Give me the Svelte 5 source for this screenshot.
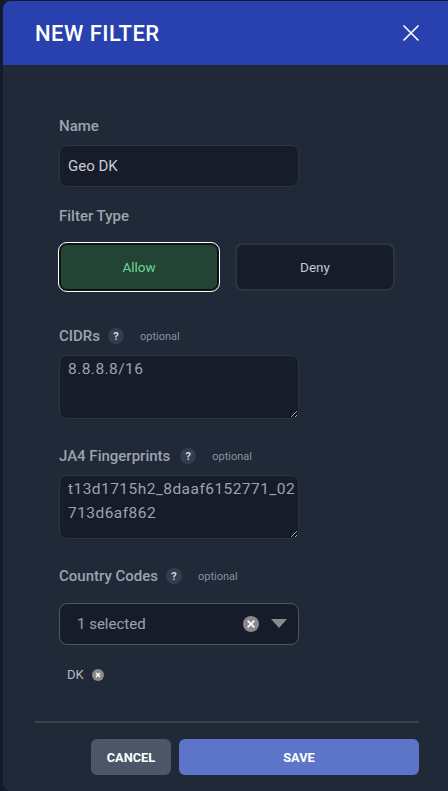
<script>
  let name = $state("Geo DK");
  let filterType = $state("allow");
  let cidrs = $state("8.8.8.8/16");
  let ja4 = $state("t13d1715h2_8daaf6152771_02713d6af862");
  let codes = $state(["DK"]);
</script>

<div class="modal">
  <header class="head">
    <h2>NEW FILTER</h2>
    <button class="close" type="button" aria-label="Close">
      <svg viewBox="0 0 18 18" width="18" height="18" aria-hidden="true">
        <path d="M1.5 1.5l15 15M16.5 1.5l-15 15" fill="none" stroke="currentColor" stroke-width="1.6" />
      </svg>
    </button>
  </header>

  <form class="body" on:submit|preventDefault>
    <div class="fields">
      <label class="label" for="name">Name</label>
      <input id="name" class="input" bind:value={name} />

      <div class="label type-label">Filter Type</div>
      <div class="types">
        <button type="button" class="type" class:allow={filterType === "allow"} on:click={() => (filterType = "allow")}>Allow</button>
        <button type="button" class="type" class:allow={filterType === "deny"} on:click={() => (filterType = "deny")}>Deny</button>
      </div>

      <div class="label-row cidrs">
        <label class="label" for="cidrs">CIDRs</label>
        <span class="help">?</span>
        <span class="optional">optional</span>
      </div>
      <textarea id="cidrs" class="area" bind:value={cidrs}></textarea>

      <div class="label-row ja4">
        <label class="label" for="ja4">JA4 Fingerprints</label>
        <span class="help">?</span>
        <span class="optional">optional</span>
      </div>
      <textarea id="ja4" class="area" bind:value={ja4}></textarea>

      <div class="label-row country">
        <span class="label">Country Codes</span>
        <span class="help">?</span>
        <span class="optional">optional</span>
      </div>
      <div class="select">
        <span class="select-text">{codes.length} selected</span>
        <span class="clear">
          <svg viewBox="0 0 16 16" width="16" height="16" aria-hidden="true">
            <circle cx="8" cy="8" r="8" fill="#8a8a8a" />
            <path d="M4.6 4.6l6.8 6.8M11.4 4.6l-6.8 6.8" stroke="#fff" stroke-width="1.6" />
          </svg>
        </span>
        <svg class="caret" viewBox="0 0 16 9" width="16" height="9" aria-hidden="true">
          <path d="M0 0h16l-8 9z" fill="#8a8a8a" />
        </svg>
      </div>

      <div class="tags">
        {#each codes as code}
          <span class="tag">
            {code}
            <svg viewBox="0 0 12 12" width="12" height="12" aria-hidden="true">
              <circle cx="6" cy="6" r="6" fill="#8a8a8a" />
              <path d="M4 4l4 4M8 4l-4 4" stroke="#fff" stroke-width="1.4" />
            </svg>
          </span>
        {/each}
      </div>
    </div>

    <footer class="foot">
      <button type="button" class="btn cancel">CANCEL</button>
      <button type="submit" class="btn save">SAVE</button>
    </footer>
  </form>
</div>

<style>
  :global(body) {
    background: #141a2b;
    font-family: Roboto, "Noto Sans", sans-serif;
    overflow: hidden;
  }

  .modal {
    margin: 1px 0 0 3px;
    height: 790px;
    background: #1f2937;
    border-radius: 8px 0 0 8px;
    overflow: hidden;
    display: flex;
    flex-direction: column;
  }

  .head {
    height: 64px;
    flex: none;
    background: #2841ae;
    color: #fff;
    display: flex;
    align-items: center;
    justify-content: space-between;
    padding: 0 28px 0 32px;
  }

  h2 {
    margin: 0;
    font-size: 22px;
    font-weight: 500;
    letter-spacing: 0.45px;
  }

  .close {
    all: unset;
    color: #fff;
    display: flex;
  }

  .body {
    flex: 1;
    display: flex;
    flex-direction: column;
    padding: 0 29px 16px 32px;
  }

  .fields {
    flex: 1;
    padding: 52px 24px 0;
  }

  .label {
    display: block;
    color: #9ca3af;
    font-size: 15px;
    font-weight: 500;
    line-height: 18px;
  }

  .input,
  .area,
  .select {
    box-sizing: border-box;
    display: block;
    width: 240px;
    background: #171c2b;
    border: 1px solid #2c3444;
    border-radius: 8px;
    color: #c9cdd3;
    font-family: inherit;
    font-size: 15px;
    outline: none;
  }

  .input {
    height: 42px;
    margin-top: 10px;
    padding: 0 8px;
  }

  .type-label {
    margin-top: 20px;
  }

  .types {
    display: flex;
    gap: 16px;
    margin-top: 18px;
  }

  .type {
    box-sizing: border-box;
    width: 160px;
    height: 48px;
    border-radius: 8px;
    border: 2px solid #2c3444;
    background: #171c2b;
    color: #c3c8d0;
    font-family: inherit;
    font-size: 13.5px;
  }

  .type.allow {
    background: #234435;
    color: #6fd695;
    border: 1px solid #111;
    outline: 1px solid #fff;
    box-shadow: inset 0 0 0 1px #111;
  }

  .label-row {
    display: flex;
    align-items: center;
    height: 18px;
  }

  .cidrs {
    margin-top: 36px;
  }

  .ja4 {
    margin-top: 28px;
  }

  .country {
    margin-top: 28px;
  }

  .help {
    width: 16px;
    height: 16px;
    margin-left: 8px;
    border-radius: 50%;
    background: #333d50;
    color: #d1d5db;
    font-size: 11px;
    font-weight: 700;
    display: flex;
    align-items: center;
    justify-content: center;
  }

  .ja4 .help {
    margin-left: 10px;
  }

  .optional {
    margin-left: 16px;
    color: #8791a1;
    font-size: 11px;
  }

  .area {
    height: 64px;
    margin-top: 10px;
    padding: 1px 0 1px 8px;
    color: #9ca3af;
    font-size: 15.5px;
    letter-spacing: 0.45px;
    line-height: 24px;
    word-break: break-all;
  }

  .select {
    height: 42px;
    margin-top: 18px;
    border-color: #4b5563;
    padding: 0 11px 0 17px;
    display: flex;
    align-items: center;
    color: #9ca3af;
  }

  .select-text {
    flex: 1;
  }

  .clear {
    display: flex;
    margin-right: 12px;
  }

  .caret {
    margin-top: -2px;
  }

  .tags {
    margin-top: 19px;
    padding-left: 8px;
  }

  .tag {
    display: inline-flex;
    align-items: center;
    gap: 8px;
    color: #b4bac4;
    font-size: 13px;
  }

  .foot {
    border-top: 2px solid #3a4250;
    padding-top: 16px;
    display: flex;
    justify-content: flex-end;
    gap: 8px;
  }

  .btn {
    height: 36px;
    border: none;
    border-radius: 6px;
    color: #fff;
    font-family: inherit;
    font-size: 12.8px;
    font-weight: 700;
  }

  .cancel {
    width: 80px;
    background: #4b5768;
  }

  .save {
    width: 240px;
    background: #5d75c8;
  }
</style>
